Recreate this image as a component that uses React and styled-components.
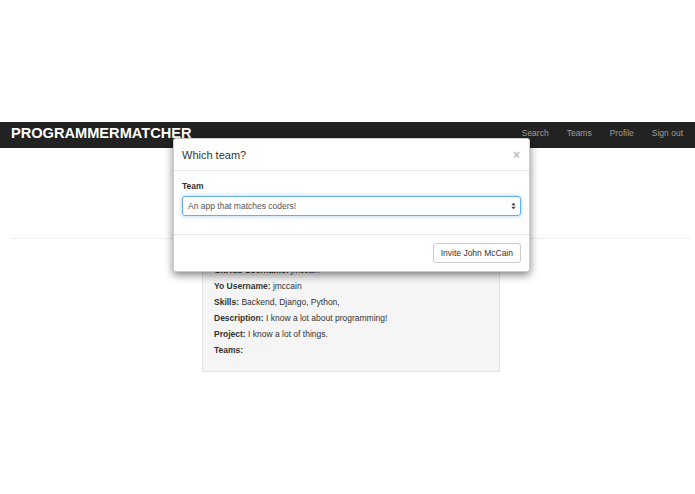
import React from "react";
import styled, { createGlobalStyle } from "styled-components";

const Global = createGlobalStyle`
  html, body { margin: 0; padding: 0; background: #fff; }
  body {
    font-family: "Liberation Sans", Arial, Helvetica, sans-serif;
    font-size: 8.5px;
    color: #333;
  }
`;

const Page = styled.div`
  position: relative;
  width: 695px;
  height: 494px;
  padding-top: 122px;
  box-sizing: border-box;
  overflow: hidden;
`;

const Navbar = styled.nav`
  height: 26px;
  background: #222;
  display: flex;
  align-items: center;
  justify-content: space-between;
  padding: 0 11px;
`;

const Brand = styled.div`
  color: #fff;
  font-weight: 700;
  font-size: 14.6px;
  margin-top: -5px;
`;

const NavLinks = styled.div`
  display: flex;
  gap: 18px;
  padding-right: 1px;
  margin-top: -4px;
`;

const NavLink = styled.a`
  color: #9d9d9d;
  font-size: 8.5px;
  text-decoration: none;
`;

const Main = styled.main`
  padding: 90px 5px 0 10px;
`;

const Rule = styled.hr`
  margin: 0;
  border: 0;
  border-top: 1px solid #eee;
`;

const Panel = styled.section`
  width: 298px;
  margin: 10px 0 0 192px;
  box-sizing: border-box;
  background: #f5f5f5;
  border: 1px solid #e3e3e3;
  border-top: 0;
  padding: 13px 11px 13px;
`;

const Line = styled.p`
  margin: 0;
  line-height: 16px;
  color: #333;
  b { font-weight: 700; }
`;

const Modal = styled.div`
  position: absolute;
  left: 173px;
  top: 138px;
  width: 357px;
  background: #fff;
  border: 1px solid rgba(0, 0, 0, 0.2);
  border-radius: 3px;
  box-shadow: 0 3px 9px rgba(0, 0, 0, 0.5);
  box-sizing: border-box;
`;

const ModalHeader = styled.div`
  display: flex;
  align-items: center;
  justify-content: space-between;
  height: 31px;
  padding: 0 9px 0 8px;
  border-bottom: 1px solid #e5e5e5;
`;

const Title = styled.h4`
  margin: 0;
  font-size: 11px;
  font-weight: 500;
  color: #333;
`;

const Close = styled.span`
  color: #bbb;
  font-size: 12px;
  font-weight: 700;
  line-height: 1;
`;

const ModalBody = styled.div`
  padding: 10px 8px 18px;
  border-bottom: 1px solid #e5e5e5;
`;

const Label = styled.label`
  display: block;
  font-weight: 700;
  font-size: 8.5px;
  margin-bottom: 5px;
`;

const Select = styled.div`
  height: 20px;
  box-sizing: border-box;
  border: 1px solid #66afe9;
  border-radius: 3px;
  box-shadow: 0 0 4px rgba(102, 175, 233, 0.6);
  display: flex;
  align-items: center;
  justify-content: space-between;
  padding: 0 4px 0 5px;
  color: #555;
  font-size: 8.5px;
`;

const Footer = styled.div`
  display: flex;
  justify-content: flex-end;
  padding: 8px 8px 8px;
`;

const Button = styled.button`
  font-family: inherit;
  font-size: 8.5px;
  color: #333;
  background: #fff;
  border: 1px solid #ccc;
  border-radius: 3px;
  height: 20px;
  padding: 0 7px;
`;

export default function App() {
  return (
    <Page>
      <Global />
      <Navbar>
        <Brand>PROGRAMMERMATCHER</Brand>
        <NavLinks>
          <NavLink href="#">Search</NavLink>
          <NavLink href="#">Teams</NavLink>
          <NavLink href="#">Profile</NavLink>
          <NavLink href="#">Sign out</NavLink>
        </NavLinks>
      </Navbar>
      <Main>
        <Rule />
        <Panel>
          <Line><b>GitHub Username:</b> jmccain</Line>
          <Line><b>Yo Username:</b> jmccain</Line>
          <Line><b>Skills:</b> Backend, Django, Python,</Line>
          <Line><b>Description:</b> I know a lot about programming!</Line>
          <Line><b>Project:</b> I know a lot of things.</Line>
          <Line><b>Teams:</b></Line>
        </Panel>
      </Main>
      <Modal>
        <ModalHeader>
          <Title>Which team?</Title>
          <Close>×</Close>
        </ModalHeader>
        <ModalBody>
          <Label>Team</Label>
          <Select>
            <span>An app that matches coders!</span>
            <svg width="5" height="8" viewBox="0 0 5 8">
              <path d="M0.5 3.2 L2.5 0.8 L4.5 3.2 Z" fill="#333" />
              <path d="M0.5 4.8 L2.5 7.2 L4.5 4.8 Z" fill="#333" />
            </svg>
          </Select>
        </ModalBody>
        <Footer>
          <Button>Invite John McCain</Button>
        </Footer>
      </Modal>
    </Page>
  );
}
